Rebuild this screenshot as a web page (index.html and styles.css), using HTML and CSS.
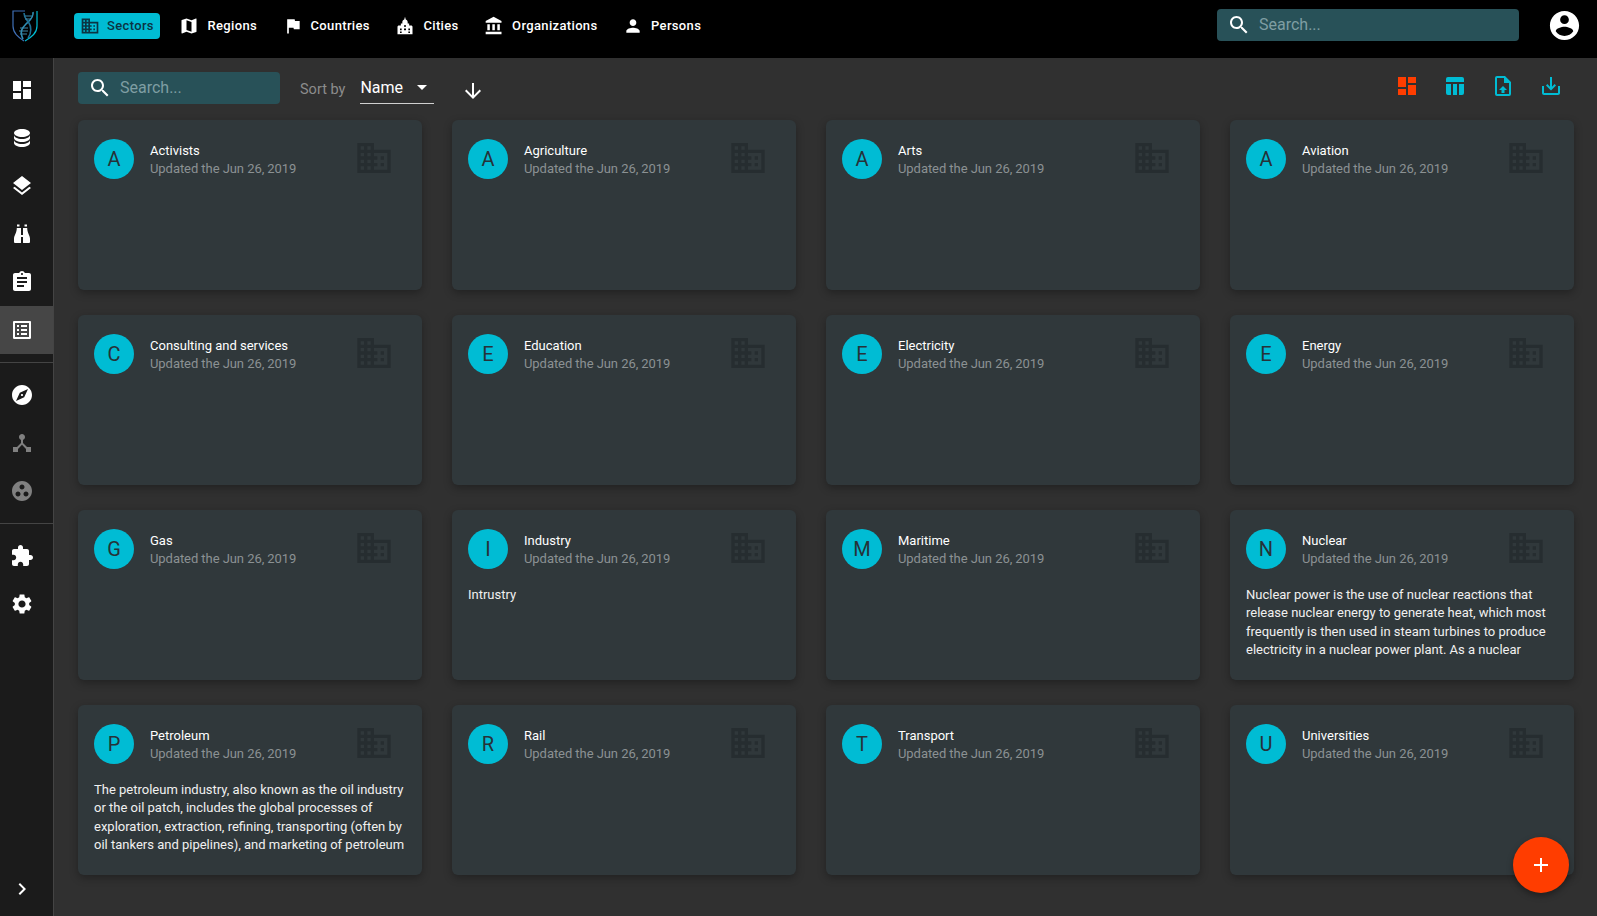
FILE: index.html
```html
<!DOCTYPE html>
<html lang="en">
<head>
  <meta charset="UTF-8">
  <title>Sectors</title>
  <link rel="stylesheet" href="styles.css">
</head>
<body>
  <svg class="defs" width="0" height="0">
    <symbol id="i-domain" viewBox="0 0 24 24"><path d="M12 7V3H2v18h20V7H12zM6 19H4v-2h2v2zm0-4H4v-2h2v2zm0-4H4V9h2v2zm0-4H4V5h2v2zm4 12H8v-2h2v2zm0-4H8v-2h2v2zm0-4H8V9h2v2zm0-4H8V5h2v2zm10 12h-8v-2h2v-2h-2v-2h2v-2h-2V9h8v10zm-2-8h-2v2h2v-2zm0 4h-2v2h2v-2z"/></symbol>
    <symbol id="i-map" viewBox="0 0 24 24"><path d="M20.500 3l-.16.03L15 5.100 9 3 3.360 4.900c-.21.07-.36.25-.36.48V20.500c0 .28.22.5.5.5l.16-.03L9 18.900l6 2.100 5.640-1.900c.21-.07.36-.25.36-.48V3.500c0-.28-.22-.5-.5-.5zM15 19l-6-2.110V5l6 2.110V19z"/></symbol>
    <symbol id="i-flag" viewBox="0 0 24 24"><path d="M14.400 6L14 4H5v17h2v-7h5.600l.4 2h7V6z"/></symbol>
    <symbol id="i-city" viewBox="0 0 24 24"><path d="M12 1l.9 3.100c1.500.6 2.300 1.800 2.300 3.100V9H17v2.500h3l1 1V22H3v-9.500l1-1h3V9h1.800V7.200c0-1.300.8-2.500 2.300-3.100L12 1zM10.800 11v2h2.400v-2h-2.400zm0 4v2h2.400v-2h-2.400zM6 15v2h2v-2H6zm10 0v2h2v-2h-2zm-10 3.500v2h2v-2H6zm10 0v2h2v-2h-2z"/></symbol>
    <symbol id="i-bank" viewBox="0 0 24 24"><path d="M4 10v7h3v-7H4zm6 0v7h3v-7h-3zM2 22h19v-3H2v3zm14-12v7h3v-7h-3zm-4.500-9L2 6v2h19V6l-9.500-5z"/></symbol>
    <symbol id="i-person" viewBox="0 0 24 24"><path d="M12 12c2.210 0 4-1.790 4-4s-1.790-4-4-4-4 1.790-4 4 1.790 4 4 4zm0 2c-2.670 0-8 1.340-8 4v2h16v-2c0-2.660-5.330-4-8-4z"/></symbol>
    <symbol id="i-account" viewBox="0 0 24 24"><path d="M12 2C6.480 2 2 6.480 2 12s4.480 10 10 10 10-4.480 10-10S17.520 2 12 2zm0 3c1.660 0 3 1.340 3 3s-1.340 3-3 3-3-1.340-3-3 1.340-3 3-3zm0 14.200c-2.500 0-4.710-1.280-6-3.220.03-1.990 4-3.080 6-3.080 1.990 0 5.970 1.090 6 3.080-1.290 1.940-3.500 3.220-6 3.220z"/></symbol>
    <symbol id="i-search" viewBox="0 0 24 24"><path d="M15.500 14h-.79l-.28-.27C15.410 12.590 16 11.110 16 9.500 16 5.910 13.090 3 9.500 3S3 5.910 3 9.500 5.910 16 9.500 16c1.610 0 3.090-.59 4.230-1.570l.27.28v.79l5 4.990L20.490 19l-4.990-5zm-6 0C7.010 14 5 11.990 5 9.500S7.010 5 9.500 5 14 7.010 14 9.500 11.990 14 9.500 14z"/></symbol>
    <symbol id="i-dashboard" viewBox="0 0 24 24"><path d="M3 13h8V3H3v10zm0 8h8v-6H3v6zm10 0h8V11h-8v10zm0-18v6h8V3h-8z"/></symbol>
    <symbol id="i-database" viewBox="0 0 24 24"><path d="M12 3C7.580 3 4 4.790 4 7s3.580 4 8 4 8-1.790 8-4-3.580-4-8-4zM4 9v3c0 2.210 3.580 4 8 4s8-1.790 8-4V9c0 2.210-3.580 4-8 4s-8-1.790-8-4zm0 5v3c0 2.210 3.580 4 8 4s8-1.790 8-4v-3c0 2.210-3.580 4-8 4s-8-1.790-8-4z"/></symbol>
    <symbol id="i-layers" viewBox="0 0 24 24"><path d="M11.990 18.540l-7.370-5.730L3 14.070l9 7 9-7-1.630-1.270-7.380 5.740zM12 16l7.360-5.730L21 9l-9-7-9 7 1.630 1.270L12 16z"/></symbol>
    <symbol id="i-binoculars" viewBox="0 0 24 24"><path d="M7 2.500h2.500v2H7zM14.500 2.500H17v2h-2.500zM6.800 6h4.200v7h2V6h4.200c0 5 2.800 7.500 2.800 10.500V20a1 1 0 0 1-1 1h-5.500a.5.500 0 0 1-.5-.5V15h-2v5.500a.5.500 0 0 1-.5.500H5a1 1 0 0 1-1-1v-3.500c0-3 2.800-5.500 2.800-10.500z"/></symbol>
    <symbol id="i-assignment" viewBox="0 0 24 24"><path d="M19 3h-4.180C14.400 1.840 13.300 1 12 1c-1.300 0-2.400.84-2.820 2H5c-1.100 0-2 .9-2 2v14c0 1.100.9 2 2 2h14c1.100 0 2-.9 2-2V5c0-1.100-.9-2-2-2zm-7 0c.55 0 1 .45 1 1s-.45 1-1 1-1-.45-1-1 .45-1 1-1zm2 14H7v-2h7v2zm3-4H7v-2h10v2zm0-4H7V7h10v2z"/></symbol>
    <symbol id="i-list" viewBox="0 0 24 24"><path d="M19 5v14H5V5h14m1.100-2H3.900c-.5 0-.9.4-.9.9v16.200c0 .4.4.9.9.9h16.200c.4 0 .9-.5.9-.9V3.900c0-.5-.5-.9-.9-.9zM11 7h6v2h-6V7zm0 4h6v2h-6v-2zm0 4h6v2h-6zM7 7h2v2H7zm0 4h2v2H7zm0 4h2v2H7z"/></symbol>
    <symbol id="i-explore" viewBox="0 0 24 24"><path d="M12 10.900c-.61 0-1.100.49-1.100 1.100s.49 1.100 1.100 1.100c.61 0 1.100-.49 1.100-1.100s-.49-1.100-1.100-1.100zM12 2C6.480 2 2 6.480 2 12s4.480 10 10 10 10-4.480 10-10S17.520 2 12 2zm2.190 12.190L6 18l3.810-8.190L18 6l-3.810 8.190z"/></symbol>
    <symbol id="i-hub" viewBox="0 0 24 24"><path d="M17 16l-4-4V8.820C14.160 8.400 15 7.300 15 6c0-1.660-1.340-3-3-3S9 4.340 9 6c0 1.300.84 2.400 2 2.820V12l-4 4H3v5h5v-3.050l4-4.200 4 4.200V21h5v-5h-4z"/></symbol>
    <symbol id="i-group" viewBox="0 0 24 24"><path d="M12 2C6.480 2 2 6.480 2 12s4.480 10 10 10 10-4.480 10-10S17.520 2 12 2zM8 17.500c-1.380 0-2.500-1.120-2.500-2.500s1.120-2.500 2.500-2.500 2.500 1.120 2.500 2.500-1.120 2.500-2.500 2.500zM9.500 8c0-1.380 1.120-2.500 2.500-2.500s2.500 1.120 2.500 2.500-1.120 2.500-2.500 2.500S9.500 9.380 9.500 8zm6.500 9.500c-1.380 0-2.500-1.120-2.500-2.500s1.120-2.500 2.500-2.500 2.500 1.120 2.500 2.500-1.120 2.500-2.500 2.500z"/></symbol>
    <symbol id="i-extension" viewBox="0 0 24 24"><path d="M20.500 11H19V7c0-1.100-.9-2-2-2h-4V3.500C13 2.120 11.880 1 10.500 1S8 2.120 8 3.500V5H4c-1.100 0-1.990.9-1.990 2v3.800H3.500c1.490 0 2.700 1.210 2.700 2.700s-1.210 2.700-2.700 2.700H2V20c0 1.100.9 2 2 2h3.800v-1.500c0-1.490 1.210-2.700 2.700-2.700 1.490 0 2.700 1.210 2.700 2.700V22H17c1.100 0 2-.9 2-2v-4h1.500c1.380 0 2.500-1.120 2.500-2.500S21.880 11 20.500 11z"/></symbol>
    <symbol id="i-settings" viewBox="0 0 24 24"><path d="M19.140 12.940c.04-.3.06-.61.06-.94 0-.32-.02-.64-.07-.94l2.030-1.580c.18-.14.23-.41.12-.61l-1.920-3.320c-.12-.22-.37-.29-.59-.22l-2.390.96c-.5-.38-1.030-.7-1.620-.94l-.36-2.540c-.04-.24-.24-.41-.48-.41h-3.840c-.24 0-.43.17-.47.41l-.36 2.540c-.59.24-1.130.57-1.620.94l-2.390-.96c-.22-.08-.47 0-.59.22L2.740 8.870c-.12.21-.08.47.12.61l2.030 1.580c-.05.3-.09.63-.09.94s.02.64.07.94l-2.030 1.580c-.18.14-.23.41-.12.61l1.920 3.320c.12.22.37.29.59.22l2.390-.96c.5.38 1.030.7 1.620.94l.36 2.540c.05.24.24.41.48.41h3.840c.24 0 .44-.17.47-.41l.36-2.540c.59-.24 1.130-.56 1.620-.94l2.390.96c.22.08.47 0 .59-.22l1.920-3.320c.12-.22.07-.47-.12-.61l-2.010-1.580zM12 15.600c-1.980 0-3.600-1.620-3.600-3.600s1.620-3.600 3.600-3.600 3.600 1.620 3.600 3.600-1.620 3.600-3.600 3.600z"/></symbol>
    <symbol id="i-chevron" viewBox="0 0 24 24"><path d="M10 6L8.590 7.410 13.170 12l-4.580 4.590L10 18l6-6z"/></symbol>
    <symbol id="i-table" viewBox="0 0 24 24"><path d="M5 3h14a2 2 0 0 1 2 2v3H3V5a2 2 0 0 1 2-2zM3 10h5v11H5a2 2 0 0 1-2-2zM10 10h4v11h-4zM16 10h5v9a2 2 0 0 1-2 2h-3z"/></symbol>
    <symbol id="i-upload" viewBox="0 0 24 24"><path d="M14 2H6a2 2 0 0 0-2 2v16a2 2 0 0 0 2 2h12a2 2 0 0 0 2-2V8l-6-6zm4 18H6V4h7v5h5v11zM12 12l-4 4h2.500v3h3v-3H16z"/></symbol>
    <symbol id="i-save" viewBox="0 0 24 24"><path d="M19 12v7H5v-7H3v7c0 1.100.9 2 2 2h14c1.100 0 2-.9 2-2v-7h-2zm-6 .67l2.590-2.580L17 11.500l-5 5-5-5 1.410-1.410L11 12.670V3h2z"/></symbol>
    <symbol id="i-down" viewBox="0 0 24 24"><path d="M20 12l-1.410-1.410L13 16.170V4h-2v12.170l-5.580-5.590L4 12l8 8 8-8z"/></symbol>
    <symbol id="i-add" viewBox="0 0 24 24"><path d="M19 13h-6v6h-2v-6H5v-2h6V5h2v6h6v2z"/></symbol>
  </svg>

  <header class="topbar">
    <svg class="logo" viewBox="0 0 26 32">
      <path class="logo-left" d="M13 1H1v15c0 7 5 11 11 15"/>
      <path class="logo-right" d="M25 1v15c0 7-5 11-12 15"/>
      <path class="logo-helix-a" d="M21 2c1 6-4 9-7 12s-7 7-3 15"/>
      <path class="logo-helix-b" d="M12 3c0 5 3 7 5 10s3 10-1 15"/>
      <path class="logo-rungs" d="M13 6h7M13 9h6M8 18h8M7 21h9M8 24h7"/>
    </svg>
    <nav class="nav">
      <a class="nav-btn active"><svg class="nav-icon"><use href="#i-domain"/></svg><span>Sectors</span></a>
      <a class="nav-btn"><svg class="nav-icon"><use href="#i-map"/></svg><span>Regions</span></a>
      <a class="nav-btn"><svg class="nav-icon"><use href="#i-flag"/></svg><span>Countries</span></a>
      <a class="nav-btn"><svg class="nav-icon"><use href="#i-city"/></svg><span>Cities</span></a>
      <a class="nav-btn"><svg class="nav-icon"><use href="#i-bank"/></svg><span>Organizations</span></a>
      <a class="nav-btn"><svg class="nav-icon"><use href="#i-person"/></svg><span>Persons</span></a>
    </nav>
    <div class="search search-top">
      <svg class="search-icon"><use href="#i-search"/></svg>
      <span>Search...</span>
    </div>
    <svg class="account"><use href="#i-account"/></svg>
  </header>

  <div class="layout">
    <aside class="sidebar">
      <a class="side-item"><svg><use href="#i-dashboard"/></svg></a>
      <a class="side-item"><svg><use href="#i-database"/></svg></a>
      <a class="side-item"><svg><use href="#i-layers"/></svg></a>
      <a class="side-item"><svg><use href="#i-binoculars"/></svg></a>
      <a class="side-item"><svg><use href="#i-assignment"/></svg></a>
      <a class="side-item selected"><svg><use href="#i-list"/></svg></a>
      <div class="side-sep"></div>
      <a class="side-item"><svg><use href="#i-explore"/></svg></a>
      <a class="side-item dim"><svg><use href="#i-hub"/></svg></a>
      <a class="side-item dim"><svg><use href="#i-group"/></svg></a>
      <div class="side-sep"></div>
      <a class="side-item"><svg><use href="#i-extension"/></svg></a>
      <a class="side-item"><svg><use href="#i-settings"/></svg></a>
      <a class="side-item side-bottom"><svg><use href="#i-chevron"/></svg></a>
    </aside>

    <main class="content">
      <div class="toolbar">
        <div class="search search-list">
          <svg class="search-icon"><use href="#i-search"/></svg>
          <span>Search...</span>
        </div>
        <span class="sort-label">Sort by</span>
        <div class="sort-select"><span>Name</span><i class="caret"></i></div>
        <svg class="sort-dir"><use href="#i-down"/></svg>
        <div class="tools">
          <svg class="orange"><use href="#i-dashboard"/></svg>
          <svg><use href="#i-table"/></svg>
          <svg><use href="#i-upload"/></svg>
          <svg><use href="#i-save"/></svg>
        </div>
      </div>

      <div class="grid">
        <article class="card"><div class="card-head"><div class="avatar">A</div><div class="card-text"><div class="card-title">Activists</div><div class="card-date">Updated the Jun 26, 2019</div></div><svg class="card-icon"><use href="#i-domain"/></svg></div></article>
        <article class="card"><div class="card-head"><div class="avatar">A</div><div class="card-text"><div class="card-title">Agriculture</div><div class="card-date">Updated the Jun 26, 2019</div></div><svg class="card-icon"><use href="#i-domain"/></svg></div></article>
        <article class="card"><div class="card-head"><div class="avatar">A</div><div class="card-text"><div class="card-title">Arts</div><div class="card-date">Updated the Jun 26, 2019</div></div><svg class="card-icon"><use href="#i-domain"/></svg></div></article>
        <article class="card"><div class="card-head"><div class="avatar">A</div><div class="card-text"><div class="card-title">Aviation</div><div class="card-date">Updated the Jun 26, 2019</div></div><svg class="card-icon"><use href="#i-domain"/></svg></div></article>

        <article class="card"><div class="card-head"><div class="avatar">C</div><div class="card-text"><div class="card-title">Consulting and services</div><div class="card-date">Updated the Jun 26, 2019</div></div><svg class="card-icon"><use href="#i-domain"/></svg></div></article>
        <article class="card"><div class="card-head"><div class="avatar">E</div><div class="card-text"><div class="card-title">Education</div><div class="card-date">Updated the Jun 26, 2019</div></div><svg class="card-icon"><use href="#i-domain"/></svg></div></article>
        <article class="card"><div class="card-head"><div class="avatar">E</div><div class="card-text"><div class="card-title">Electricity</div><div class="card-date">Updated the Jun 26, 2019</div></div><svg class="card-icon"><use href="#i-domain"/></svg></div></article>
        <article class="card"><div class="card-head"><div class="avatar">E</div><div class="card-text"><div class="card-title">Energy</div><div class="card-date">Updated the Jun 26, 2019</div></div><svg class="card-icon"><use href="#i-domain"/></svg></div></article>

        <article class="card"><div class="card-head"><div class="avatar">G</div><div class="card-text"><div class="card-title">Gas</div><div class="card-date">Updated the Jun 26, 2019</div></div><svg class="card-icon"><use href="#i-domain"/></svg></div></article>
        <article class="card"><div class="card-head"><div class="avatar">I</div><div class="card-text"><div class="card-title">Industry</div><div class="card-date">Updated the Jun 26, 2019</div></div><svg class="card-icon"><use href="#i-domain"/></svg></div><p class="card-desc">Intrustry</p></article>
        <article class="card"><div class="card-head"><div class="avatar">M</div><div class="card-text"><div class="card-title">Maritime</div><div class="card-date">Updated the Jun 26, 2019</div></div><svg class="card-icon"><use href="#i-domain"/></svg></div></article>
        <article class="card"><div class="card-head"><div class="avatar">N</div><div class="card-text"><div class="card-title">Nuclear</div><div class="card-date">Updated the Jun 26, 2019</div></div><svg class="card-icon"><use href="#i-domain"/></svg></div><p class="card-desc">Nuclear power is the use of nuclear reactions that release nuclear energy to generate heat, which most frequently is then used in steam turbines to produce electricity in a nuclear power plant. As a nuclear</p></article>

        <article class="card"><div class="card-head"><div class="avatar">P</div><div class="card-text"><div class="card-title">Petroleum</div><div class="card-date">Updated the Jun 26, 2019</div></div><svg class="card-icon"><use href="#i-domain"/></svg></div><p class="card-desc">The petroleum industry, also known as the oil industry or the oil patch, includes the global processes of exploration, extraction, refining, transporting (often by oil tankers and pipelines), and marketing of petroleum</p></article>
        <article class="card"><div class="card-head"><div class="avatar">R</div><div class="card-text"><div class="card-title">Rail</div><div class="card-date">Updated the Jun 26, 2019</div></div><svg class="card-icon"><use href="#i-domain"/></svg></div></article>
        <article class="card"><div class="card-head"><div class="avatar">T</div><div class="card-text"><div class="card-title">Transport</div><div class="card-date">Updated the Jun 26, 2019</div></div><svg class="card-icon"><use href="#i-domain"/></svg></div></article>
        <article class="card"><div class="card-head"><div class="avatar">U</div><div class="card-text"><div class="card-title">Universities</div><div class="card-date">Updated the Jun 26, 2019</div></div><svg class="card-icon"><use href="#i-domain"/></svg></div></article>
      </div>
    </main>
  </div>

  <button class="fab"><svg><use href="#i-add"/></svg></button>
</body>
</html>
```

FILE: styles.css
```css
:root {
  --bg: #303030; --side: #1b1b1b;
  --card: #30383b; --accent: #00bcd4;
  --orange: #ff3d00; --field: #285158;
}
* { box-sizing: border-box; }
html, body { height: 100%; }
body {
  margin: 0;
  background: var(--bg); color: #fff;
  font-family: Roboto, "Liberation Sans", sans-serif;
  display: flex; flex-direction: column;
  overflow: hidden;
}
svg { fill: currentColor; display: block; }
.defs { position: absolute; }

/* top bar */
.topbar {
  height: 58px; flex: none;
  background: #000;
  display: flex; align-items: center;
  padding: 0 15px 6px 12px;
}
.logo { width: 26px; height: 32px; margin-right: 36px; fill: none; }
.logo-left { stroke: #3f6fb5; stroke-width: 1.2; }
.logo-right { stroke: #00bcd4; stroke-width: 1.2; }
.logo-helix-a { stroke: #2f8fb5; stroke-width: 1.6; }
.logo-helix-b { stroke: #1f6f94; stroke-width: 1.6; }
.logo-rungs { stroke: #3f87a8; stroke-width: 1; }
.nav { display: flex; align-items: center; }
.nav-btn {
  display: flex; align-items: center; gap: 8px;
  height: 26px; padding: 0 6px;
  margin-right: 13.500px;
  border-radius: 4px;
  font-size: 13px; font-weight: 500; letter-spacing: .35px;
  color: #fff;
}
.nav-btn span { margin-top: -2px; }
.nav-btn.active { background: var(--accent); color: #0b3442; gap: 7px; }
.nav-icon { width: 20px; height: 20px; }

.search {
  display: flex; align-items: center;
  height: 32px;
  background: var(--field);
  border-radius: 4px;
  font-size: 16px; color: #7f9ea3;
}
.search span { margin-top: -2px; }
.search-icon { width: 24px; height: 24px; color: #fff; margin: 0 8px 0 10px; }
.search-top { width: 302px; margin-left: auto; margin-right: 28px; margin-top: -2px; }
.account { width: 35px; height: 35px; margin-top: -2px; }

/* sidebar */
.layout { flex: 1; display: flex; min-height: 0; }
.sidebar {
  width: 54px; flex: none;
  background: var(--side);
  border-right: 1px solid #444;
  padding: 8px 0 3px;
  display: flex; flex-direction: column;
}
.side-item {
  height: 48px; flex: none;
  display: flex; align-items: center;
  padding-left: 10px;
  color: #fff;
}
.side-item svg { width: 24px; height: 24px; }
.side-item.selected { background: #464646; }
.side-item.dim { color: #808080; }
.side-sep { height: 1px; background: #444; margin: 8px 0; flex: none; }
.side-bottom { margin-top: auto; }

/* main area */
.content { flex: 1; padding: 14px 22px 0 24px; min-width: 0; }
.toolbar { display: flex; align-items: center; height: 32px; margin-bottom: 16px; }
.search-list { width: 202px; margin-right: 20px; }
.sort-label { font-size: 14.500px; color: #8c8c8c; margin: 2px 15px 0 0; }
.sort-select {
  width: 74px; height: 32px;
  display: flex; align-items: center;
  border-bottom: 1px solid #d0d0d0;
  font-size: 16px;
  position: relative;
}
.sort-select span { margin-top: -1px; }
.caret {
  position: absolute; right: 7px; top: 13px;
  border: 5px solid transparent; border-top-color: #fff; border-bottom: 0;
}
.sort-dir { width: 24px; height: 24px; margin: 6px 0 0 27px; }
.tools { margin-left: auto; display: flex; color: var(--accent); margin-top: -4px; }
.tools svg { width: 24px; height: 24px; margin: 0 12px; }
.tools .orange { color: var(--orange); }

/* cards */
.grid {
  display: grid;
  grid-template-columns: 344px 344px 374px 344px;
  grid-auto-rows: 170px;
  column-gap: 30px; row-gap: 25px;
}
.card {
  background: var(--card);
  border-radius: 6px;
  padding: 19px 16px 0;
  box-shadow: 0 3px 8px rgba(0,0,0,.3);
  overflow: hidden;
}
.card-head { display: flex; height: 40px; margin-right: 12px; }
.avatar {
  width: 40px; height: 40px; flex: none;
  border-radius: 50%;
  background: var(--accent); color: #263238;
  font-size: 20px; line-height: 40px; text-align: center;
}
.card-text { flex: 1; padding: 3px 0 0 16px; font-size: 13px; line-height: 18px; }
.card-date { color: #8b9193; letter-spacing: -.06px; }
.card-icon { width: 40px; height: 40px; color: #262d30; flex: none; margin-top: -1px; }
.card-desc {
  margin: 17px 0 0;
  font-size: 13px; line-height: 18.300px;
  color: #f0f0f0;
}

.fab {
  position: fixed; right: 28px; bottom: 23px;
  width: 56px; height: 56px;
  border: 0; border-radius: 50%; padding: 16px;
  background: var(--orange); color: #fff;
  box-shadow: 0 3px 6px rgba(0,0,0,.35);
}
.fab svg { width: 24px; height: 24px; }
```
